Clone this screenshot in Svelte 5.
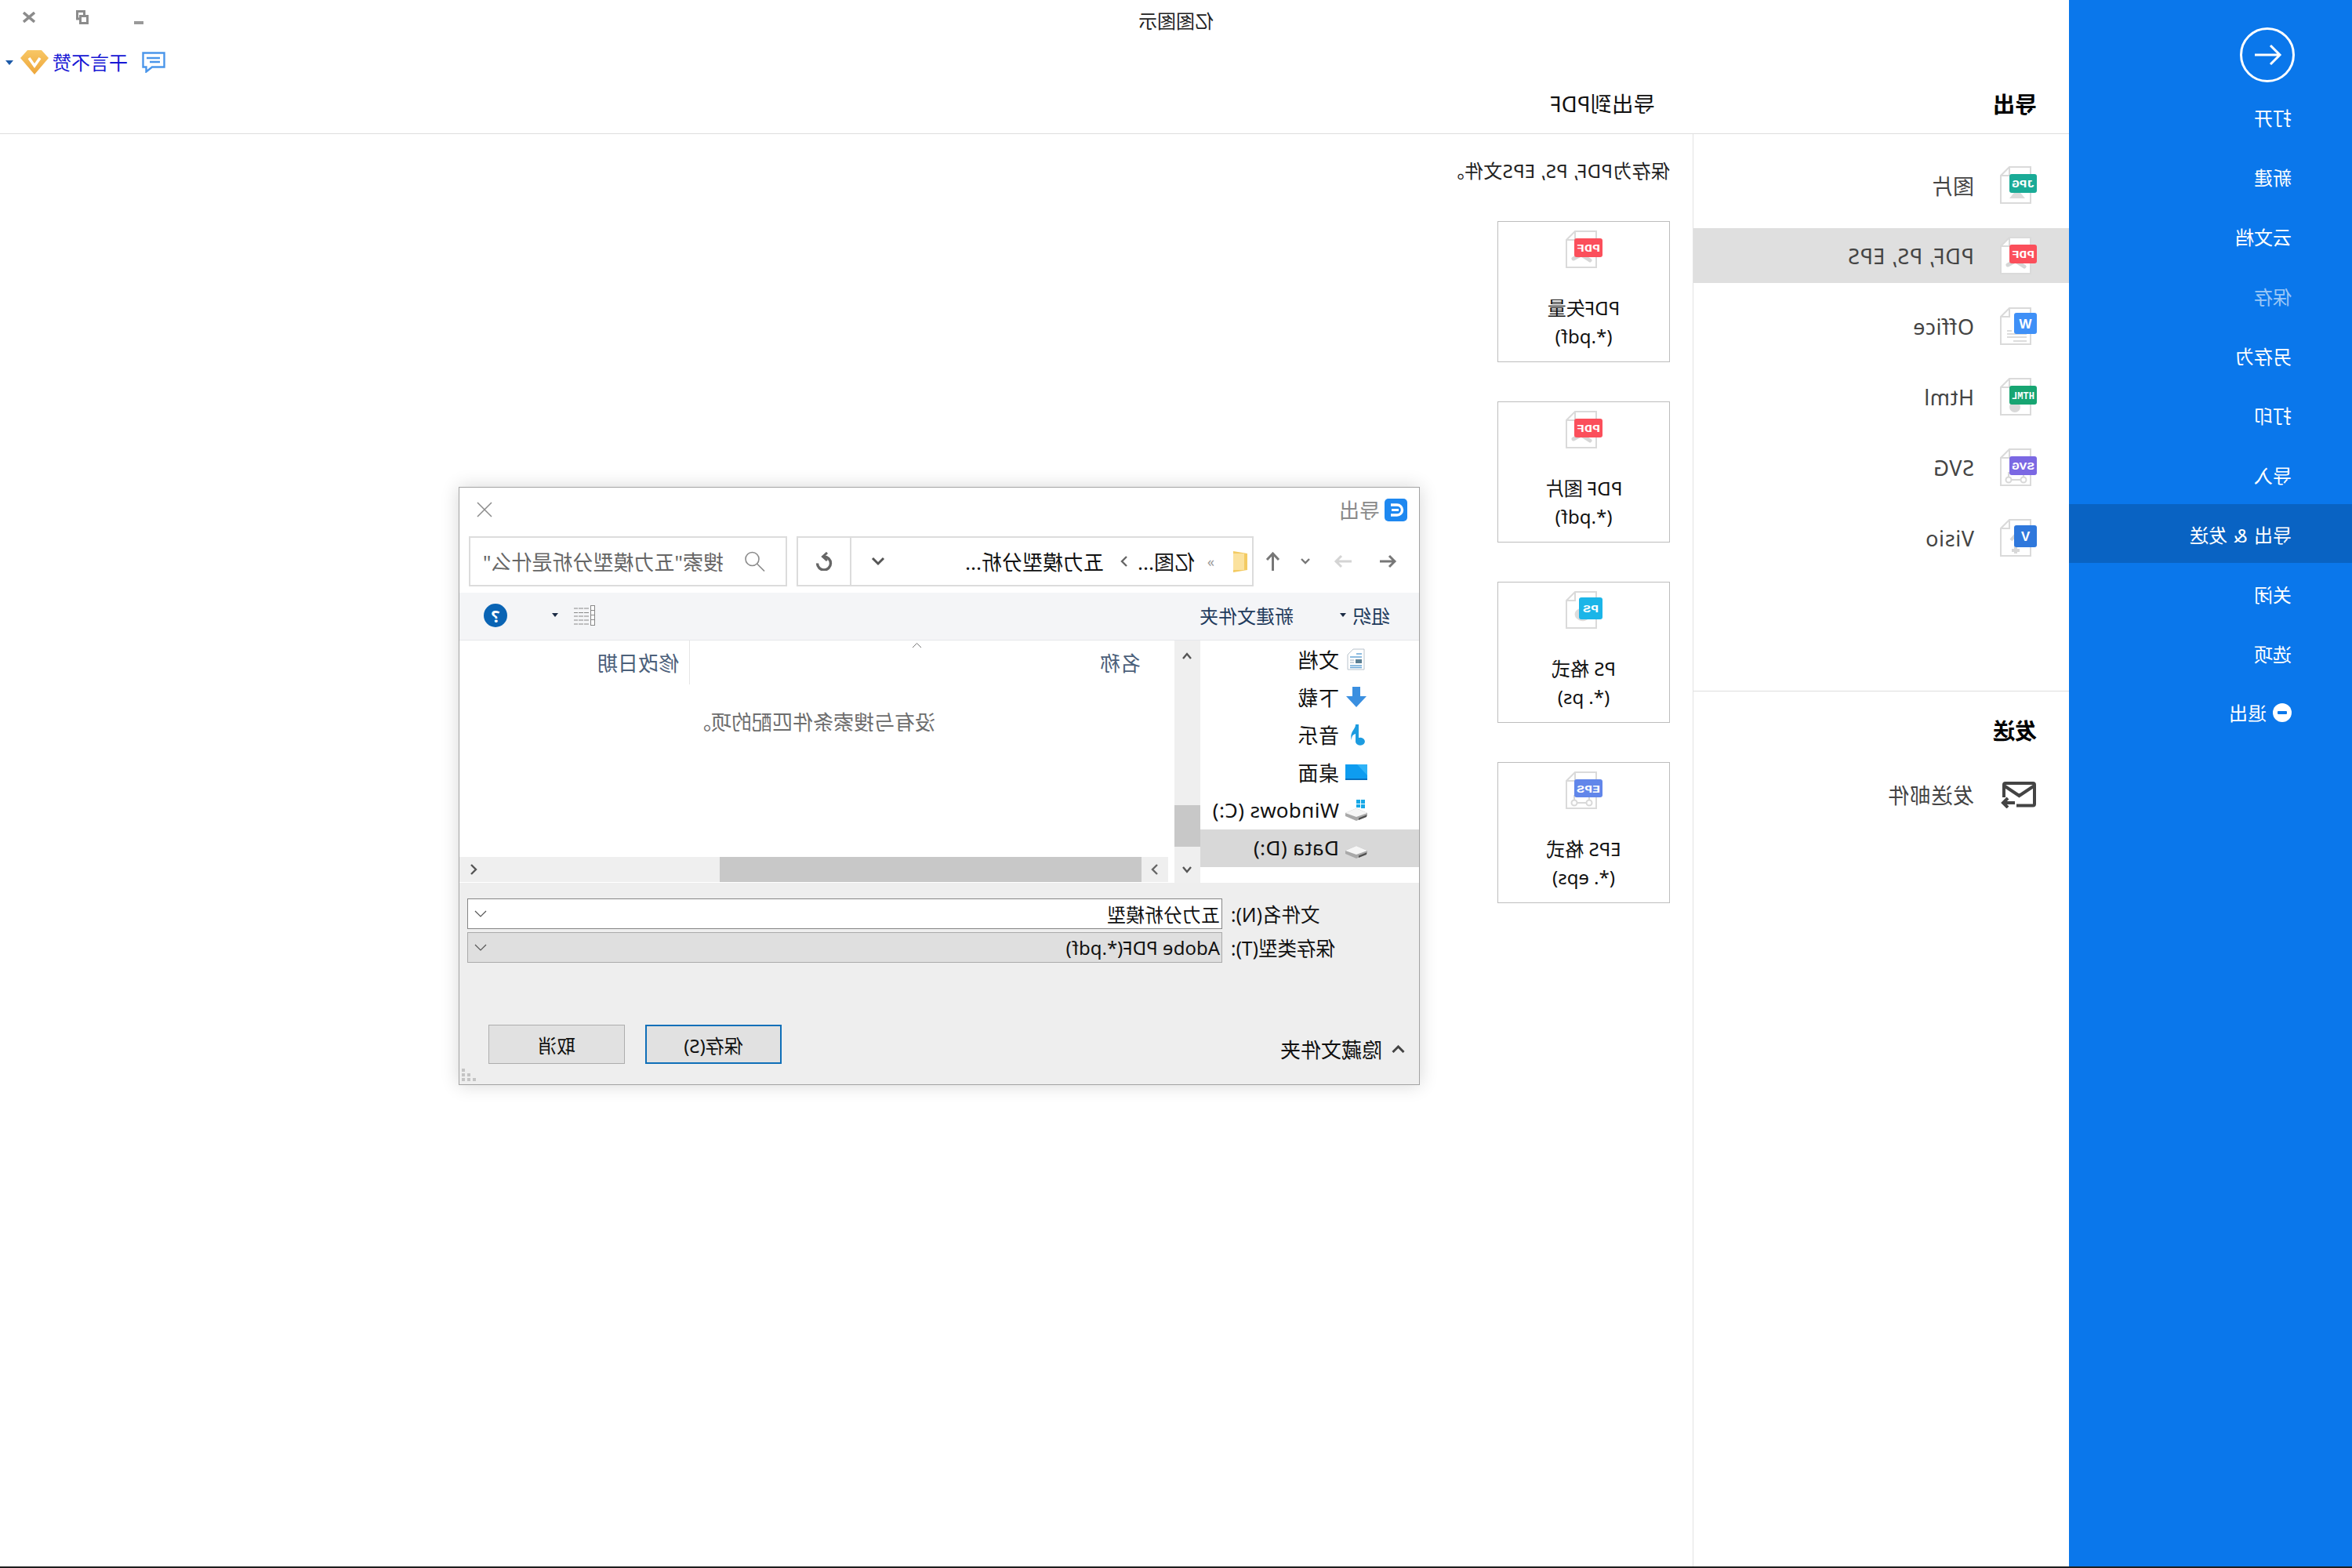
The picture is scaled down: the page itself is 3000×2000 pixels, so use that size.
<script>
  const menu = [
    { t: '打开' }, { t: '新建' }, { t: '云文档' }, { t: '保存', dim: true }, { t: '另存为' },
    { t: '打印' }, { t: '导入' }, { t: '导出 & 发送', on: true }, { t: '关闭' }, { t: '选项' }
  ];
  const formats = [
    { t: '图片', b: 'JPG', c: '#1aab97', g: 'jpg', y: 10, w: 35, h: 24 },
    { t: 'PDF, PS, EPS', b: 'PDF', c: '#fb4f5b', g: 'pdf', y: 10, w: 35, h: 24, on: true },
    { t: 'Office', b: 'W', c: '#3f90f7', g: 'doc', y: 7, w: 29, h: 27, big: true },
    { t: 'Html', b: 'HTML', c: '#17a572', g: 'html', y: 10, w: 35, h: 24 },
    { t: 'SVG', b: 'SVG', c: '#7b68e3', g: 'svg', y: 10, w: 35, h: 24 },
    { t: 'Visio', b: 'V', c: '#2f78dc', g: 'visio', y: 8, w: 29, h: 28, big: true }
  ];
  const cards = [
    { a: 'PDF矢量', z: '(*.pdf)', b: 'PDF', c: '#fb4f5b', g: 'pdf', y: 10, w: 36, h: 24 },
    { a: 'PDF 图片', z: '(*.pdf)', b: 'PDF', c: '#fb4f5b', g: 'pdf', y: 10, w: 36, h: 24 },
    { a: 'PS 格式', z: '(*. ps)', b: 'PS', c: '#1bb5e8', g: 'ps', y: 8, w: 30, h: 28 },
    { a: 'EPS 格式', z: '(*. eps)', b: 'EPS', c: '#6186ea', g: 'svg', y: 10, w: 36, h: 23 }
  ];
  const places = [
    { t: '文档', i: 'doc' }, { t: '下载', i: 'down' }, { t: '音乐', i: 'music' },
    { t: '桌面', i: 'desk' }, { t: 'Windows (C:)', i: 'win' }, { t: 'Data (D:)', i: 'drive', on: true }
  ];
</script>

{#snippet fileIcon(f)}
  <svg class="file" width="47" height="48" viewBox="0 0 47 48">
    <path d="M8 1H35L46 12V47H8Z" fill="#fff" stroke="#dadada" stroke-width="2" />
    <path d="M35 1V12H46" fill="none" stroke="#dadada" stroke-width="2" />
    {#if f.g === 'jpg'}
      <path d="M15 41L25 29L35 41Z" fill="#dcdcdc" />
    {:else if f.g === 'pdf'}
      <path d="M16 38L27 31M26 30L37 36" stroke="#d6d6d6" stroke-width="5" fill="none" stroke-linecap="round" />
    {:else if f.g === 'doc'}
      <path d="M13 34H38M13 38H38M13 43H30M32 30H38" stroke="#dcdcdc" stroke-width="2" fill="none" />
    {:else if f.g === 'html'}
      <circle cx="28" cy="37" r="7" fill="#d9d9d9" />
    {:else if f.g === 'svg'}
      <path d="M17 30V40H36V30" stroke="#d8d8d8" stroke-width="2" fill="none" />
      <circle cx="17" cy="40" r="3.5" fill="#fff" stroke="#d8d8d8" stroke-width="2" />
      <circle cx="36" cy="40" r="3.5" fill="#fff" stroke="#d8d8d8" stroke-width="2" />
    {:else if f.g === 'visio'}
      <path d="M27 22V44M21 27L27 20L33 27M22 40H32" stroke="#d8d8d8" stroke-width="4" fill="none" />
    {:else if f.g === 'ps'}
      <path d="M14 26C15 38 26 42 34 34C38 28 33 22 27 22C28 30 22 32 14 26Z" fill="#dcdcdc" />
    {/if}
    <rect x="0" y={f.y} width={f.w} height={f.h} rx="3" fill={f.c} />
    {#if f.big}
      <text x={f.w / 2} y={f.y + f.h / 2 + 6} text-anchor="middle" class="bt big">{f.b}</text>
    {:else}
      <text x={f.w / 2} y={f.y + f.h / 2 + 5} text-anchor="middle" class="bt" textLength={f.b.length > 2 ? f.w - 6 : f.w - 10} lengthAdjust="spacingAndGlyphs">{f.b}</text>
    {/if}
  </svg>
{/snippet}

{#snippet placeIcon(k)}
  <svg class="place" width="28" height="28" viewBox="0 0 28 28">
    {#if k === 'doc'}
      <path d="M4 1H18L25 8V27H4Z" fill="#fff" stroke="#b9c3cc" />
      <path d="M7 7H14M7 11H22M7 22H22M7 24.5H22" stroke="#6aa6d6" stroke-width="1.5" />
      <rect x="7" y="14" width="8" height="5" fill="#5b7f93" />
      <path d="M17 15H22M17 18H22" stroke="#9ab" />
    {:else if k === 'down'}
      <path d="M9 1H19V13H27L14 27L1 13H9Z" fill="#3a8fe0" />
    {:else if k === 'music'}
      <path d="M15 1C15 8 23 10 20 21C20 14 17 14 15 13V22A6 5 0 1 1 11 18V1Z" fill="#1d9ce0" />
    {:else if k === 'desk'}
      <rect x="0" y="4" width="28" height="20" fill="#0e9cf0" />
      <path d="M0 4H13L0 18Z" fill="#2fb3f7" />
      <rect x="0" y="22" width="28" height="2" fill="#0b6fbd" />
    {:else}
      <path d="M0 18L14 12L28 18V22L14 28L0 22Z" fill="#a9a9a9" />
      <path d="M0 18L14 12L28 18L14 23Z" fill="#f6f6f6" />
      <path d="M1 20.500L11 24.500V27L1 23Z" fill="#4f4f4f" />
      {#if k === 'win'}
        <path d="M3 1H8V6H3ZM9 1H14V6H9ZM3 7H8V12H3ZM9 7H14V11H9Z" fill="#18a8e6" />
      {/if}
    {/if}
  </svg>
{/snippet}

<div class="root">
  <nav class="side">
    <svg class="back" width="70" height="70" viewBox="0 0 70 70">
      <circle cx="35" cy="35" r="33.5" fill="none" stroke="#fff" stroke-width="3" />
      <path d="M51 35H19M31 23L19 35L31 47" fill="none" stroke="#fff" stroke-width="3" />
    </svg>
    {#each menu as m}
      <div class="mi" class:dim={m.dim} class:on={m.on}>{m.t}</div>
    {/each}
    <div class="mi quit">
      <svg width="24" height="24" viewBox="0 0 24 24"><circle cx="12" cy="12" r="12" fill="#fff" /><rect x="6" y="10" width="12" height="4" rx="1" fill="#0a77eb" /></svg>
      <span>退出</span>
    </div>
  </nav>

  <main class="main">
    <header class="head">
      <div class="head-a"><h2>导出</h2></div>
      <div class="head-b">
        <div class="apptitle">亿图图示</div>
        <h3>导出到PDF</h3>
      </div>
      <div class="head-c">
        <div class="winbtns">
          <svg width="12" height="4" viewBox="0 0 12 4"><rect width="12" height="4" fill="#999" /></svg>
          <svg width="16" height="18" viewBox="0 0 16 18"><path d="M1.5 7.5H10.5V16.5H1.5ZM5.5 7V1.5H14.5V11H11" fill="none" stroke="#8c8c8c" stroke-width="3" /></svg>
          <svg width="16" height="14" viewBox="0 0 16 14"><path d="M1 1L15 13M15 1L1 13" stroke="#8c8c8c" stroke-width="3.4" /></svg>
        </div>
        <div class="user">
          <svg width="30" height="27" viewBox="0 0 30 27"><path d="M1.5 1.5H28.5V19.5H24.5V25.5L17 19.5H1.5ZM7 8H24M7 13H20" fill="none" stroke="#4b96ea" stroke-width="2.4" /></svg>
          <span class="uname">干言不赞</span>
          <svg width="36" height="31" viewBox="0 0 36 31"><defs><linearGradient id="g" x1="0" y1="0" x2="0" y2="1"><stop offset="0" stop-color="#f8c765" /><stop offset="1" stop-color="#eda63a" /></linearGradient></defs><path d="M9 0H27L36 10L18 31L0 10Z" fill="url(#g)" /><path d="M11 10L18 20L25 10" fill="none" stroke="#fff" stroke-width="3.5" /></svg>
          <span class="caret"></span>
        </div>
      </div>
    </header>

    <div class="body">
      <section class="panel">
        <div class="rows">
          {#each formats as f}
            <div class="row" class:on={f.on}>
              {@render fileIcon(f)}
              <span>{f.t}</span>
            </div>
          {/each}
        </div>
        <div class="send">
          <h2>发送</h2>
          <div class="row">
            <svg class="mail" width="47" height="34" viewBox="0 0 47 34"><path d="M26 30.5H5A2 2 0 0 1 3 28.5V4A2 2 0 0 1 5 2H40A2 2 0 0 1 42 4V20M3 5L22.5 18L42 5M28 27H43M37 21L43 27L37 33" fill="none" stroke="#444" stroke-width="4" /></svg>
            <span>发送邮件</span>
          </div>
        </div>
      </section>

      <section class="content">
        <p class="desc">保存为PDF, PS, EPS文件。</p>
        <div class="cards">
          {#each cards as c}
            <div class="card">
              {@render fileIcon(c)}
              <div class="ct"><div>{c.a}</div><div>{c.z}</div></div>
            </div>
          {/each}
        </div>
      </section>
    </div>
  </main>

  <div class="dlg">
    <div class="dtitle">
      <svg width="29" height="29" viewBox="0 0 29 29"><rect width="29" height="29" rx="5" fill="#1e88f0" /><path d="M21 8H13A6.5 6.5 0 0 0 13 21H21" fill="none" stroke="#fff" stroke-width="3.4" /><path d="M11 14.5H20" stroke="#fff" stroke-width="3" /></svg>
      <span>导出</span>
      <svg class="dclose" width="20" height="20" viewBox="0 0 20 20"><path d="M1 1L19 19M19 1L1 19" stroke="#8a8a8a" stroke-width="1.5" /></svg>
    </div>

    <div class="dnav">
      <svg width="22" height="18" viewBox="0 0 22 18"><path d="M22 9H3M10 2L3 9L10 16" fill="none" stroke="#777" stroke-width="3" /></svg>
      <svg class="n2" width="23" height="18" viewBox="0 0 23 18"><path d="M0 9H20M13 2L20 9L13 16" fill="none" stroke="#d4d4d4" stroke-width="3" /></svg>
      <svg class="n3" width="12" height="8" viewBox="0 0 12 8"><path d="M1 1L6 6L11 1" fill="none" stroke="#777" stroke-width="2.4" /></svg>
      <svg class="n4" width="19" height="24" viewBox="0 0 19 24"><path d="M9.5 24V3M2 10L9.5 2L17 10" fill="none" stroke="#777" stroke-width="3" /></svg>
      <div class="addr">
        <svg width="18" height="27" viewBox="0 0 18 27"><path d="M0 0L18 3V24L0 27Z" transform="matrix(-1 0 0 1 18 0)" fill="#f3cb63" /><path d="M4 3H18V24H4Z" fill="#fbe29e" /></svg>
        <span class="cr1">»</span>
        <span class="cr2">亿图...</span>
        <svg class="cr3" width="10" height="14" viewBox="0 0 10 14"><path d="M2 1L8 7L2 13" fill="none" stroke="#666" stroke-width="2.4" /></svg>
        <span class="cr4">五力模型分析...</span>
        <svg class="cr5" width="18" height="12" viewBox="0 0 18 12"><path d="M2 2L9 9L16 2" fill="none" stroke="#555" stroke-width="3" /></svg>
        <div class="refresh">
          <svg width="22" height="24" viewBox="0 0 22 24"><path d="M11 6A8.500 8.500 0 1 0 19.500 14.500" fill="none" stroke="#666" stroke-width="3.4" /><path d="M7 1L12.500 6L7 11" fill="none" stroke="#666" stroke-width="3" /></svg>
        </div>
      </div>
      <div class="search">
        <svg width="27" height="26" viewBox="0 0 27 26"><circle cx="16.500" cy="10" r="8.500" fill="none" stroke="#8a8a8a" stroke-width="1.6" /><path d="M10.500 16L1 25.500" stroke="#8a8a8a" stroke-width="1.6" /></svg>
        <span>搜索"五力模型分析是什么"</span>
      </div>
    </div>

    <div class="dtool">
      <span>组织</span>
      <span class="tc"></span>
      <span class="tnew">新建文件夹</span>
      <svg class="tview" width="27" height="26" viewBox="0 0 27 26"><rect x="0.500" y="0.500" width="5" height="25" fill="#fff" stroke="#888" /><path d="M1 6.500H5M1 12.500H5M1 18.500H5" stroke="#888" /><path d="M8 4H27M8 9.500H27M8 14H27M8 19H27M8 24H27" stroke="#888" stroke-dasharray="6 1" /></svg>
      <span class="tc t2"></span>
      <span class="help">?</span>
    </div>

    <div class="dmid">
      <div class="pane">
        {#each places as p}
          <div class="pl" class:on={p.on}>
            {@render placeIcon(p.i)}
            <span>{p.t}</span>
          </div>
        {/each}
      </div>
      <div class="vs">
        <svg class="v1" width="12" height="12" viewBox="0 0 12 12"><path d="M1 9L6 3L11 9" fill="none" stroke="#555" stroke-width="2.4" /></svg>
        <div class="vt"></div>
        <svg class="v2" width="12" height="12" viewBox="0 0 12 12"><path d="M1 3L6 9L11 3" fill="none" stroke="#555" stroke-width="2.4" /></svg>
      </div>
      <div class="list">
        <div class="lh">
          <div class="lname">
            <span>名称</span>
            <svg class="sort" width="13" height="8" viewBox="0 0 13 8"><path d="M1 1L6.500 6.500L12 1" transform="matrix(1 0 0 -1 0 8)" fill="none" stroke="#777" /></svg>
          </div>
          <div class="ldate">修改日期</div>
        </div>
        <div class="lb">没有与搜索条件匹配的项。</div>
        <div class="hs">
          <svg width="10" height="14" viewBox="0 0 10 14"><path d="M2 1L8 7L2 13" fill="none" stroke="#666" stroke-width="2.4" /></svg>
          <div class="ht"></div>
          <svg class="h2" width="10" height="14" viewBox="0 0 10 14"><path d="M8 1L2 7L8 13" fill="none" stroke="#555" stroke-width="2.4" /></svg>
        </div>
      </div>
    </div>

    <div class="dfoot">
      <div class="fr">
        <label for="fn">文件名(N):</label>
        <div class="combo" id="fn"><span>五力分析模型</span><svg width="16" height="9" viewBox="0 0 16 9"><path d="M1 1L8 8L15 1" fill="none" stroke="#555" stroke-width="1.2" /></svg></div>
      </div>
      <div class="fr r2">
        <label for="ft">保存类型(T):</label>
        <div class="combo sel" id="ft"><span>Adobe PDF(*.pdf)</span><svg width="16" height="9" viewBox="0 0 16 9"><path d="M1 1L8 8L15 1" fill="none" stroke="#555" stroke-width="1.2" /></svg></div>
      </div>
      <div class="fb">
        <div class="hide">
          <svg width="17" height="10" viewBox="0 0 17 10"><path d="M1.500 9L8.500 2L15.500 9" fill="none" stroke="#444" stroke-width="3" /></svg>
          <span>隐藏文件夹</span>
        </div>
        <div class="btn prim">保存(S)</div>
        <div class="btn">取消</div>
      </div>
      <svg class="grip" width="18" height="17" viewBox="0 0 18 17"><path d="M0 12H4V16H0ZM7 12H11V16H7ZM14 12H18V16H14ZM7 6H11V10H7ZM14 6H18V10H14ZM14 0H18V4H14Z" fill="#c4c4c4" /></svg>
    </div>
  </div>
</div>

<style>
  :global(body) { margin: 0; background: #fff; }
  .root {
    position: relative;
    display: flex;
    width: 3000px;
    height: 2000px;
    overflow: hidden;
    transform: scaleX(-1);
    background: #fff;
    color: #222;
    font-family: "Noto Sans", "Noto Sans CJK SC", sans-serif;
    font-size: 24px;
    box-sizing: border-box;
    border-bottom: 2px solid #1e1e1e;
  }
  h2, h3, p { margin: 0; }

  .side { width: 361px; flex: none; background: #0a77eb; color: #fff; display: flex; flex-direction: column; }
  .back { margin: 35px 0 6px 73px; display: block; flex: none; }
  .mi { height: 75px; margin-bottom: 1px; padding: 4px 0 0 77px; box-sizing: border-box; display: flex; align-items: center; line-height: 30px; flex: none; word-spacing: 2px; }
  .mi.dim { color: rgba(255,255,255,.6); }
  .mi.on { background: #0963c3; }
  .quit { gap: 8px; }
  .quit svg { display: block; margin-top: -3px; }
  .quit span { margin-top: -1px; }

  .main { flex: 1; display: flex; flex-direction: column; min-width: 0; }
  .head { height: 171px; box-sizing: border-box; border-bottom: 1px solid #dedede; display: flex; flex: none; }
  .head-a { width: 480px; flex: none; padding: 113px 0 0 41px; box-sizing: border-box; }
  .head h2, .send h2 { font-size: 28px; line-height: 40px; font-weight: 700; color: #000; }
  .head-b { flex: 1; padding-top: 12px; }
  .apptitle { margin-left: 611px; line-height: 30px; }
  .head-b h3 { margin: 71px 0 0 48px; font-size: 27.5px; line-height: 40px; font-weight: 400; color: #111; }
  .head-c { display: flex; flex-direction: column; align-items: flex-end; padding: 13px 7px 0 0; }
  .winbtns { display: flex; align-items: flex-end; height: 18px; margin-right: 22px; }
  .winbtns svg { display: block; }
  .winbtns svg:nth-child(2) { margin-left: 58px; }
  .winbtns svg:nth-child(3) { margin-left: 52px; margin-bottom: 2px; }
  .user { display: flex; align-items: center; margin-top: 33px; height: 31px; }
  .user svg { display: block; }
  .uname { color: #1616d4; margin: 0 5px 0 18px; line-height: 30px; }
  .caret { width: 0; height: 0; border: 5px solid transparent; border-top: 6px solid #1d5aa8; border-bottom: 0; margin-left: 9px; }

  .body { flex: 1; display: flex; min-height: 0; }
  .panel { width: 480px; flex: none; box-sizing: border-box; border-right: 1px solid #e3e3e3; padding-top: 30px; }
  .rows { display: flex; flex-direction: column; gap: 20px; }
  .row { height: 70px; display: flex; align-items: center; padding-left: 41px; color: #444; font-size: 27px; letter-spacing: .6px; }
  .row .file { margin-right: 33px; flex: none; display: block; }
  .row.on { background: #dfdfdf; }
  .row .mail { margin-right: 33px; display: block; }
  .send { margin-top: 160px; border-top: 1px solid #dedede; padding-top: 30px; }
  .send h2 { padding-left: 41px; margin-bottom: 27px; }
  .send .row span { margin-top: -2px; }

  .bt { font: 700 13px "Liberation Mono", monospace; fill: #fff; letter-spacing: 0; }
  .bt.big { font: 700 17px "Liberation Sans", sans-serif; }

  .content { flex: 1; padding: 32px 0 0 29px; }
  .desc { line-height: 30px; color: #222; letter-spacing: .3px; }
  .cards { display: flex; flex-direction: column; gap: 50px; margin-top: 49px; }
  .card { width: 220px; height: 180px; box-sizing: border-box; border: 1px solid #bdbdbd; padding-top: 11px; display: flex; flex-direction: column; align-items: center; }
  .card .file { display: block; margin-left: -2px; }
  .ct { margin-top: 33px; text-align: center; line-height: 36px; color: #111; }

  .dlg {
    position: absolute; left: 1189px; top: 621px; width: 1226px; height: 763px; box-sizing: border-box;
    border: 1px solid #a3a3a3; background: #fff; box-shadow: 0 0 22px rgba(0,0,0,.16);
    display: flex; flex-direction: column; color: #111;
  }
  .dtitle { height: 62px; flex: none; display: flex; align-items: center; padding: 0 22px 6px 15px; color: #8a8a8a; box-sizing: border-box; }
  .dtitle span { margin-left: 6px; font-size: 26px; }
  .dtitle svg { display: block; }
  .dclose { margin-left: auto; margin-right: 0; }

  .dnav { height: 64px; flex: none; display: flex; align-items: center; padding-left: 28px; }
  .dnav > svg { display: block; flex: none; }
  .n2 { margin-left: 36px; }
  .n3 { margin-left: 30px; }
  .n4 { margin-left: 26px; }
  .addr, .search { height: 64px; box-sizing: border-box; border: 2px solid #dcdcdc; display: flex; align-items: center; flex: none; }
  .addr { width: 583px; margin-left: 15px; padding-left: 6px; }
  .cr1 { margin-left: 24px; color: #999; font-size: 18px; width: 8px; }
  .cr2 { margin-left: 17px; width: 68px; white-space: nowrap; font-size: 26px; }
  .cr3 { margin-left: 17px; }
  .cr4 { margin-left: 21px; white-space: nowrap; width: 173px; font-size: 26px; }
  .cr5 { margin-left: auto; margin-right: 25px; }
  .refresh { width: 68px; height: 100%; border-left: 2px solid #dcdcdc; box-sizing: border-box; display: flex; align-items: center; justify-content: center; }
  .search { width: 406px; margin-left: 12px; padding-left: 26px; color: #666; white-space: nowrap; }
  .search span { margin-left: 26px; font-size: 26px; }

  .dtool { height: 61px; margin-top: 8px; flex: none; box-sizing: border-box; background: #f4f5f7; border-bottom: 1px solid #e5e7ea; display: flex; align-items: center; padding: 0 31px 3px 37px; color: #1f3b5c; }
  .tc { width: 0; height: 0; border: 4px solid transparent; border-top: 5px solid #1b2b45; border-bottom: 0; margin-left: 8px; }
  .tnew { margin-left: 59px; }
  .tview { margin-left: auto; display: block; }
  .t2 { margin-left: 20px; }
  .help { width: 30px; height: 30px; border-radius: 50%; background: #0a64b4; color: #fff; margin-left: 57px; text-align: center; font-size: 22px; line-height: 30px; font-weight: 700; }

  .dmid { height: 309px; flex: none; display: flex; }
  .pane { width: 279px; flex: none; padding-top: 1px; box-sizing: border-box; }
  .pl { height: 48px; display: flex; align-items: center; padding: 0 0 3px 66px; gap: 8px; white-space: nowrap; font-size: 26px; box-sizing: border-box; letter-spacing: .4px; }
  .pl.on { background: #d8d8d8; }
  .place { display: block; flex: none; }
  .vs { width: 33px; flex: none; background: #efefef; display: flex; flex-direction: column; align-items: center; }
  .v1 { margin-top: 14px; display: block; }
  .vt { width: 33px; height: 53px; margin-top: 184px; background: #c8c8c8; }
  .v2 { margin-top: 23px; display: block; }
  .list { flex: 1; margin-left: 8px; display: flex; flex-direction: column; min-width: 0; }
  .lh { height: 56px; flex: none; display: flex; color: #4c607a; font-size: 26px; }
  .lname { width: 611px; box-sizing: border-box; border-right: 1px solid #e5e5e5; padding-left: 35px; display: flex; align-items: center; }
  .sort { margin-left: 227px; align-self: flex-start; margin-top: 2px; display: block; }
  .ldate { padding-left: 13px; display: flex; align-items: center; }
  .lb { flex: 1; padding: 33px 0 0 297px; line-height: 30px; color: #6d6d6d; font-size: 26px; }
  .hs { height: 32px; margin-bottom: 1px; flex: none; background: #efefef; display: flex; align-items: center; padding-left: 12px; }
  .hs svg { display: block; }
  .ht { width: 538px; height: 32px; margin-left: 12px; background: #c8c8c8; }
  .h2 { margin-left: auto; margin-right: 13px; }

  .dfoot { flex: 1; background: #eee; position: relative; padding-top: 20px; box-sizing: border-box; }
  .fr { display: flex; align-items: center; height: 39px; }
  .r2 { margin-top: 4px; }
  .fr label { width: 240px; text-align: right; flex: none; font-size: 24.5px; }
  .combo { width: 963px; height: 39px; margin-left: 11px; box-sizing: border-box; background: #fff; border: 1px solid #858585; display: flex; align-items: center; justify-content: space-between; padding: 0 8px 0 2px; flex: none; }
  .combo svg { display: block; }
  .combo.sel { background: #dfdfdf; border-color: #aaa; }
  .fb { display: flex; align-items: flex-start; margin-top: 79px; padding: 0 37px 0 18px; }
  .hide { display: flex; align-items: center; margin-top: 12px; margin-right: auto; }
  .hide svg { display: block; }
  .hide span { margin-left: 12px; font-size: 26px; }
  .btn { width: 174px; height: 50px; box-sizing: border-box; border: 1px solid #adadad; background: #e1e1e1; display: flex; align-items: center; justify-content: center; margin-left: 26px; }
  .btn.prim { border: 2px solid #0f6fb8; }
  .grip { position: absolute; right: 3px; bottom: 3px; display: block; }
</style>
